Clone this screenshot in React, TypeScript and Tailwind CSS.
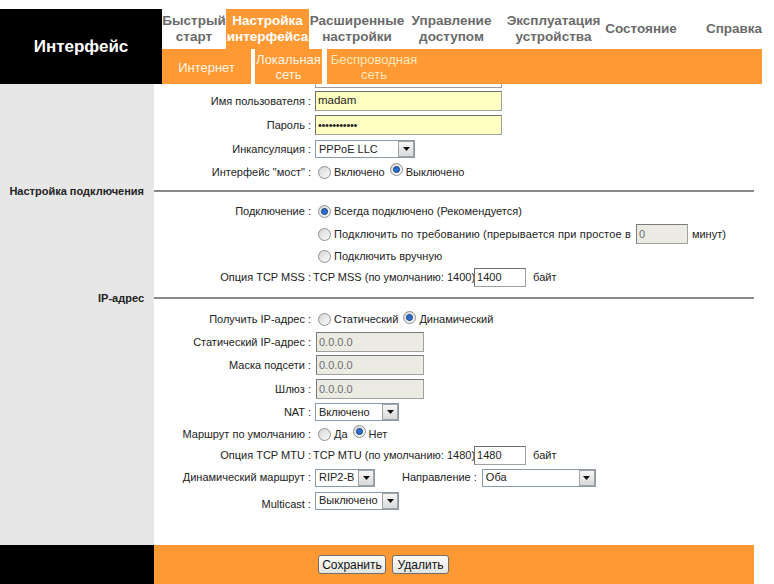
import React from "react";

const Radio = ({ checked }: { checked?: boolean }) => (
  <span className="relative inline-block w-[13px] h-[13px] shrink-0 rounded-full border border-[#8f9090] bg-linear-to-br from-[#d6d6d6] to-[#fbfbfb]">
    {checked && (
      <span className="absolute left-[2px] top-[2px] w-[7px] h-[7px] rounded-full bg-[#2b6fd0] border border-[#17407e]" />
    )}
  </span>
);

const Arrow = () => (
  <span className="w-[16px] h-[16px] shrink-0 border border-[#a3a3a3] bg-linear-to-b from-[#f7f7f7] to-[#d9d9d9] flex items-center justify-center">
    <svg width="7" height="4" viewBox="0 0 7 4">
      <path d="M0 0 H7 L3.5 4 Z" fill="#111" />
    </svg>
  </span>
);

const Select = ({ w, value }: { w: string; value: string }) => (
  <div className={`${w} h-[18px] border border-[#8a9aa8] bg-white flex items-center justify-between pl-[3px]`}>
    <span className="text-[11px] leading-none whitespace-nowrap">{value}</span>
    <Arrow />
  </div>
);

const Row = ({
  h,
  label,
  children,
  labelEnd,
}: {
  h: string;
  label?: string;
  children?: React.ReactNode;
  labelEnd?: boolean;
}) => (
  <div className={`flex ${h}`}>
    <div className="w-[154px] shrink-0 bg-[#e7e7e7]" />
    <div
      className={`w-[157px] shrink-0 flex justify-end whitespace-nowrap ${labelEnd ? "items-end" : "items-center"}`}
    >
      {label ? `${label} :` : ""}
    </div>
    <div className="flex items-center pl-[4px] whitespace-nowrap">{children}</div>
  </div>
);

const Section = ({ h, label }: { h: string; label: string }) => (
  <div className={`flex ${h}`}>
    <div className="w-[154px] shrink-0 bg-[#e7e7e7] flex items-center justify-end pr-[10px] font-bold text-[11px] whitespace-nowrap">
      {label}
    </div>
    <div className="w-[600px] flex items-center">
      <div className="w-full h-[2px] bg-[#8a8a8a]" />
    </div>
  </div>
);

export default function App() {
  const tab = "flex items-center justify-center text-center text-[13.5px] leading-[16px] font-bold text-[#6a6a6a] shrink-0";
  const dis = "ml-[1px] w-[108px] h-[20px] bg-[#ebebe4] border border-[#a0a0a0] border-t-[#7a7a7a] border-l-[#7a7a7a] flex items-center pl-[2px] text-[#6d6d6d]";
  return (
    <div className="w-[774px] h-[584px] bg-white overflow-hidden font-['Liberation_Sans',Arial,sans-serif] text-[11px] text-[#222]">
      {/* header */}
      <div className="flex pt-[9px]">
        <div className="w-[162px] h-[75px] bg-black text-white font-bold text-[17px] flex items-center justify-center">
          Интерфейс
        </div>
        <div className="w-[600px] flex flex-col">
          <div className="flex h-[40px]">
            <div className={`${tab} w-[64px]`}>Быстрый<br />старт</div>
            <div className={`${tab} w-[83px] bg-[#ff9933] text-white`}>Настройка<br />интерфейса</div>
            <div className={`${tab} w-[96px]`}>Расширенные<br />настройки</div>
            <div className={`${tab} w-[93px]`}>Управление<br />доступом</div>
            <div className={`${tab} w-[111px]`}>Эксплуатация<br />устройства</div>
            <div className={`${tab} w-[64px]`}>Состояние</div>
            <div className={`${tab} w-[56px] ml-[33px]`}>Справка</div>
          </div>
          <div className="flex h-[35px] bg-[#ff9933] text-[13px] leading-[15px]">
            <div className="w-[89px] flex items-center justify-center text-[#fff4e4] pt-[2px]">Интернет</div>
            <div className="w-[4px] bg-white" />
            <div className="w-[67px] flex items-center justify-center text-center text-[#fff4e4]">Локальная<br />сеть</div>
            <div className="w-[5px] bg-white" />
            <div className="w-[94px] flex items-center justify-center text-center text-[#ffe8bd]">Беспроводная<br />сеть</div>
          </div>
        </div>
      </div>

      {/* middle */}
      <div className="flex flex-col h-[461px]">
        <Row h="h-[5px]">
          <div className="w-[187px] h-[4px] border-x border-b border-[#9a9a9a] self-start" />
        </Row>
        <Row h="h-[24px]" label="Имя пользователя">
          <div className="w-[187px] h-[20px] bg-[#ffffc2] border border-[#a0a0a0] border-t-[#6e6e6e] border-l-[#6e6e6e] flex items-center pl-[2px] text-[11.5px]">madam</div>
        </Row>
        <Row h="h-[24px]" label="Пароль">
          <div className="w-[187px] h-[20px] bg-[#ffffc2] border border-[#a0a0a0] border-t-[#6e6e6e] border-l-[#6e6e6e] flex items-center pl-[2px] text-[11px] tracking-[-0.3px]">•••••••••••</div>
        </Row>
        <Row h="h-[24px]" label="Инкапсуляция">
          <Select w="w-[100px]" value="PPPoE LLC" />
        </Row>
        <Row h="h-[22px]" label='Интерфейс "мост"'>
          <div className="ml-[3px] flex items-center gap-[3px]">
            <Radio /> <span>Включено</span>
            <span className="ml-[2px]"><Radio checked /></span> <span>Выключено</span>
          </div>
        </Row>
        <Section h="h-[16px]" label="Настройка подключения" />
        <Row h="h-[24px]" label="Подключение">
          <div className="ml-[3px] flex items-center gap-[3px]"><Radio checked /><span>Всегда подключено (Рекомендуется)</span></div>
        </Row>
        <Row h="h-[22px]">
          <div className="ml-[3px] flex items-center gap-[3px]">
            <Radio />
            <span className="tracking-[0.15px]">Подключить по требованию (прерывается при простое в</span>
            <div className="ml-[2px] w-[52px] h-[20px] bg-[#ebebe4] border border-[#a0a0a0] border-t-[#7a7a7a] border-l-[#7a7a7a] flex items-center pl-[2px] text-[#6d6d6d]">0</div>
            <span className="ml-[1px]">минут)</span>
          </div>
        </Row>
        <Row h="h-[22px]">
          <div className="ml-[3px] flex items-center gap-[3px]"><Radio /><span>Подключить вручную</span></div>
        </Row>
        <Row h="h-[21px]" label="Опция TCP MSS">
          <span className="-ml-[2px]">TCP MSS (по умолчанию: 1400)</span>
          <div className="-ml-[1px] w-[52px] h-[19px] bg-white border border-[#a0a0a0] border-t-[#6e6e6e] border-l-[#6e6e6e] flex items-center pl-[2px]">1400</div>
          <span className="ml-[7px]">байт</span>
        </Row>
        <Section h="h-[20px]" label="IP-адрес" />
        <Row h="h-[23px]" label="Получить IP-адрес">
          <div className="ml-[3px] flex items-center gap-[3px]">
            <Radio /> <span>Статический</span>
            <span className="ml-[2px]"><Radio checked /></span> <span>Динамический</span>
          </div>
        </Row>
        <Row h="h-[22px]" label="Статический IP-адрес">
          <div className={dis}>0.0.0.0</div>
        </Row>
        <Row h="h-[24px]" label="Маска подсети">
          <div className={dis}>0.0.0.0</div>
        </Row>
        <Row h="h-[24px]" label="Шлюз">
          <div className={dis}>0.0.0.0</div>
        </Row>
        <Row h="h-[22px]" label="NAT">
          <Select w="w-[84px]" value="Включено" />
        </Row>
        <Row h="h-[22px]" label="Маршрут по умолчанию">
          <div className="ml-[3px] flex items-center gap-[3px]">
            <Radio /> <span>Да</span>
            <span className="ml-[2px]"><Radio checked /></span> <span>Нет</span>
          </div>
        </Row>
        <Row h="h-[21px]" label="Опция TCP MTU">
          <span className="-ml-[2px]">TCP MTU (по умолчанию: 1480)</span>
          <div className="-ml-[1px] w-[52px] h-[19px] bg-white border border-[#a0a0a0] border-t-[#6e6e6e] border-l-[#6e6e6e] flex items-center pl-[2px]">1480</div>
          <span className="ml-[7px]">байт</span>
        </Row>
        <Row h="h-[23px]" label="Динамический маршрут">
          <Select w="w-[60px]" value="RIP2-B" />
          <span className="ml-[27px]">Направление :</span>
          <div className="ml-[5px]"><Select w="w-[114px]" value="Оба" /></div>
        </Row>
        <Row h="h-[23px]" label="Multicast" labelEnd>
          <Select w="w-[84px]" value="Выключено" />
        </Row>
        <div className="flex flex-1">
          <div className="w-[154px] bg-[#e7e7e7]" />
        </div>
      </div>

      {/* bottom */}
      <div className="flex h-[39px]">
        <div className="w-[154px] bg-black" />
        <div className="w-[600px] bg-[#ff9933] flex items-center pl-[164px] gap-[6px]">
          <button className="w-[68px] h-[19px] rounded-[3px] border border-[#6f6f6f] bg-linear-to-b from-white to-[#e3e3de] text-[12px] leading-none text-[#111]">Сохранить</button>
          <button className="w-[57px] h-[19px] rounded-[3px] border border-[#6f6f6f] bg-linear-to-b from-white to-[#e3e3de] text-[12px] leading-none text-[#111]">Удалить</button>
        </div>
      </div>
    </div>
  );
}
